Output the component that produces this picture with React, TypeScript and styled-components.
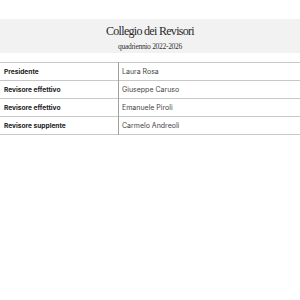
import styled, { createGlobalStyle } from "styled-components";

const GlobalStyle = createGlobalStyle`
  html, body {
    margin: 0;
    padding: 0;
    background: #ffffff;
  }
`;

const members = [
  { role: "Presidente", name: "Laura Rosa" },
  { role: "Revisore effettivo", name: "Giuseppe Caruso" },
  { role: "Revisore effettivo", name: "Emanuele Piroli" },
  { role: "Revisore supplente", name: "Carmelo Andreoli" },
];

const App = () => {
  return (
    <Page>
      <GlobalStyle />
      <Header>
        <Title>Collegio dei Revisori</Title>
        <Subtitle>quadriennio 2022-2026</Subtitle>
      </Header>
      <Table>
        <tbody>
          {members.map((m, i) => (
            <tr key={i}>
              <RoleCell>{m.role}</RoleCell>
              <NameCell>{m.name}</NameCell>
            </tr>
          ))}
        </tbody>
      </Table>
    </Page>
  );
};

const Page = styled.div`
  width: 300px;
  height: 300px;
  padding-top: 19px;
  box-sizing: border-box;
`;

const Header = styled.header`
  background-color: #f2f2f2;
  height: 34px;
  box-sizing: border-box;
  padding-top: 5px;
  display: flex;
  flex-direction: column;
  align-items: center;
  gap: 4px;
  margin-bottom: 9px;
`;

const Title = styled.h2`
  margin: 0;
  font-family: "Liberation Serif", serif;
  font-weight: 400;
  font-size: 12px;
  color: #2a2a2a;
  line-height: 14px;
  letter-spacing: -0.7px;
`;

const Subtitle = styled.p`
  margin: 0;
  font-family: "Liberation Serif", serif;
  font-size: 7.5px;
  color: #333;
  line-height: 9px;
  letter-spacing: -0.3px;
`;

const Table = styled.table`
  width: 100%;
  border-collapse: collapse;
  font-family: "Inter", "Liberation Sans", sans-serif;
  color: #222;

  tr {
    height: 18px;
    border-top: 1px solid #c8c8c8;
    border-bottom: 1px solid #c8c8c8;
  }
`;

const RoleCell = styled.td`
  width: 110px;
  padding: 0 4px;
  font-size: 6.6px;
  font-weight: 700;
  color: #1a1a1a;
  border-right: 1px solid #a0a0a0;
`;

const NameCell = styled.td`
  padding: 0 3px;
  font-size: 7px;
  font-weight: 400;
  color: #444;
`;

export default App;
